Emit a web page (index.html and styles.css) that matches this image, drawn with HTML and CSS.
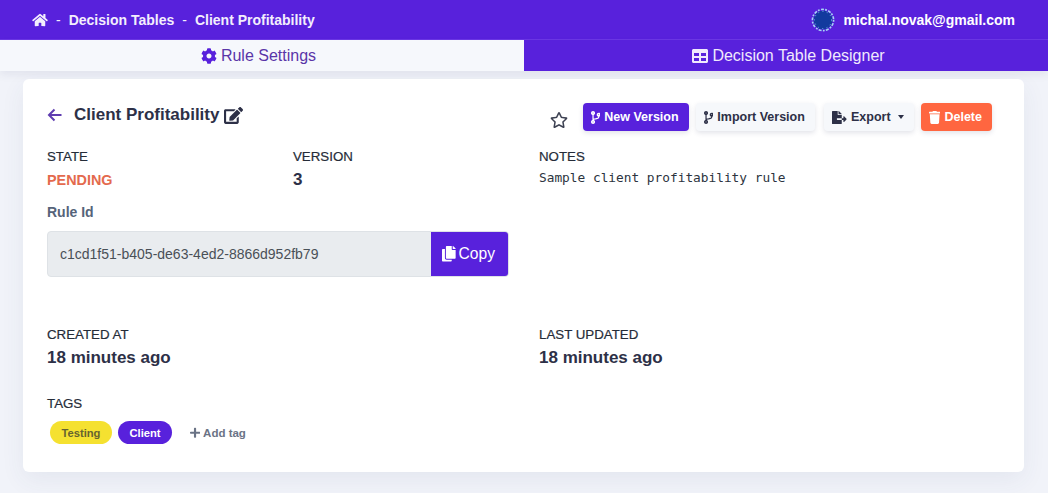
FILE: index.html
```html
<!DOCTYPE html>
<html lang="en">
<head>
    <meta charset="UTF-8">
    <title>Client Profitability</title>
    <link rel="stylesheet" href="styles.css">
</head>
<body>
    <header class="topbar">
        <nav class="crumbs">
            <svg class="icon home" viewBox="0 0 576 512"><path d="M280.37 148.26L96 300.11V464a16 16 0 0 0 16 16l112.06-.29a16 16 0 0 0 15.92-16V368a16 16 0 0 1 16-16h64a16 16 0 0 1 16 16v95.64a16 16 0 0 0 16 16.05L464 480a16 16 0 0 0 16-16V300L295.67 148.26a12.19 12.19 0 0 0-15.3 0zM571.6 251.47L488 182.56V44.05a12 12 0 0 0-12-12h-56a12 12 0 0 0-12 12v72.61L318.47 43a48 48 0 0 0-61 0L4.34 251.47a12 12 0 0 0-1.6 16.9l25.5 31A12 12 0 0 0 45.15 301l235.22-193.74a12.19 12.19 0 0 1 15.3 0L530.9 301a12 12 0 0 0 16.9-1.6l25.5-31a12 12 0 0 0-1.7-16.93z"/></svg>
            <span class="sep">-</span>
            <span>Decision Tables</span>
            <span class="sep">-</span>
            <span>Client Profitability</span>
        </nav>
        <div class="user">
            <svg class="avatar" viewBox="0 0 24 24">
                <circle cx="12" cy="12" r="9.5" fill="#123a9e"/>
                <circle cx="12" cy="12" r="10.6" fill="none" stroke="#a5d4f4" stroke-width="1.6" stroke-dasharray="1.8 1.4 3 1.2"/>
                <circle cx="12" cy="12" r="8.6" fill="none" stroke="#6fa6e6" stroke-width="1" stroke-dasharray="1.2 3.2"/>
            </svg>
            <span>michal.novak@gmail.com</span>
        </div>
    </header>

    <div class="tabs">
        <div class="tab active">
            <svg class="icon" viewBox="0 0 512 512"><path d="M487.4 315.7l-42.6-24.6c4.3-23.2 4.3-47 0-70.2l42.6-24.6c4.9-2.8 7.1-8.6 5.5-14-11.1-35.6-30-67.8-54.7-94.6-3.8-4.1-10-5.1-14.8-2.3L380.8 110c-17.9-15.4-38.5-27.3-60.8-35.1V25.8c0-5.6-3.9-10.5-9.4-11.7-36.7-8.2-74.3-7.8-109.2 0-5.5 1.2-9.4 6.1-9.4 11.7V75c-22.2 7.9-42.8 19.8-60.8 35.1L88.7 85.5c-4.9-2.8-11-1.9-14.8 2.3-24.7 26.7-43.6 58.9-54.7 94.6-1.7 5.4.6 11.2 5.5 14L67.3 221c-4.3 23.2-4.3 47 0 70.2l-42.6 24.6c-4.9 2.8-7.1 8.6-5.5 14 11.1 35.6 30 67.8 54.7 94.6 3.8 4.1 10 5.1 14.8 2.3l42.6-24.6c17.9 15.4 38.5 27.3 60.8 35.1v49.2c0 5.6 3.9 10.5 9.4 11.7 36.7 8.2 74.3 7.8 109.2 0 5.5-1.2 9.4-6.1 9.4-11.7v-49.2c22.2-7.9 42.8-19.8 60.8-35.1l42.6 24.6c4.9 2.8 11 1.9 14.8-2.3 24.7-26.7 43.6-58.9 54.7-94.6 1.5-5.5-.7-11.3-5.6-14.1zM256 336c-44.1 0-80-35.9-80-80s35.9-80 80-80 80 35.9 80 80-35.9 80-80 80z"/></svg>
            Rule Settings
        </div>
        <div class="tab">
            <svg class="icon" viewBox="0 0 512 512"><path d="M464 32H48C21.49 32 0 53.49 0 80v352c0 26.51 21.49 48 48 48h416c26.51 0 48-21.49 48-48V80c0-26.51-21.49-48-48-48zM224 416H64v-96h160v96zm0-160H64v-96h160v96zm224 160H288v-96h160v96zm0-160H288v-96h160v96z"/></svg>
            Decision Table Designer
        </div>
    </div>

    <main class="card">
        <div class="card-head">
            <div class="title">
                <svg class="back" viewBox="0 0 16 16"><path d="M14.5 8H2M7.5 2.5L2 8l5.5 5.5"/></svg>
                <h1>Client Profitability</h1>
                <svg class="icon edit" viewBox="0 0 576 512"><path d="M402.6 83.2l90.2 90.2c3.8 3.8 3.8 10 0 13.8L274.4 405.6l-92.8 10.3c-12.4 1.4-22.9-9.1-21.5-21.5l10.3-92.8L388.8 83.2c3.8-3.8 10-3.8 13.8 0zm162-22.9l-48.8-48.8c-15.2-15.2-39.9-15.2-55.2 0l-35.4 35.4c-3.8 3.8-3.8 10 0 13.8l90.2 90.2c3.8 3.8 10 3.8 13.8 0l35.4-35.4c15.2-15.3 15.2-40 0-55.2zM384 346.2V448H64V128h229.8c3.2 0 6.2-1.3 8.5-3.5l40-40c7.6-7.6 2.2-20.5-8.5-20.5H48C21.5 64 0 85.5 0 112v352c0 26.5 21.5 48 48 48h352c26.5 0 48-21.5 48-48V306.2c0-10.7-12.9-16-20.5-8.5l-40 40c-2.2 2.3-3.5 5.3-3.5 8.5z"/></svg>
            </div>
            <div class="actions">
                <svg class="icon star" viewBox="0 0 576 512"><path d="M528.1 171.5L382 150.2 316.7 17.8c-11.7-23.6-45.6-23.9-57.4 0L194 150.2 47.9 171.5c-26.2 3.8-36.7 36.1-17.7 54.6l105.7 103-25 145.5c-4.5 26.3 23.2 46 46.4 33.7L288 439.6l130.7 68.7c23.2 12.2 50.9-7.4 46.4-33.7l-25-145.5 105.7-103c19-18.5 8.5-50.8-17.7-54.6zM388.6 312.3l23.7 138.4L288 385.4l-124.3 65.3 23.7-138.4-100.6-98 139-20.2 62.2-126 62.2 126 139 20.2-100.6 98z"/></svg>
                <button class="btn btn-primary">
                    <svg class="icon" viewBox="0 0 384 512"><path d="M384 144c0-44.2-35.8-80-80-80s-80 35.8-80 80c0 36.4 24.3 67.1 57.5 76.8-.6 16.1-4.2 28.5-11 36.9-15.4 19.2-49.3 22.4-85.2 25.7-28.2 2.6-57.4 5.4-81.3 16.9v-144c32.5-10.2 56-40.5 56-76.3 0-44.2-35.8-80-80-80S0 35.8 0 80c0 35.8 23.5 66.1 56 76.3v199.3C23.5 365.9 0 396.2 0 432c0 44.2 35.8 80 80 80s80-35.8 80-80c0-34-21.2-63.1-51.2-74.6 3.1-5.2 7.8-9.8 14.9-13.4 16.2-8.2 40.4-10.4 66.1-12.8 42.2-3.9 90-8.4 118.2-43.4 14-17.4 21.1-39.8 21.6-67.9 31.6-10.8 54.4-40.7 54.4-75.9zM80 64c8.8 0 16 7.2 16 16s-7.2 16-16 16-16-7.2-16-16 7.2-16 16-16zm0 384c-8.8 0-16-7.2-16-16s7.2-16 16-16 16 7.2 16 16-7.2 16-16 16zm224-320c8.8 0 16 7.2 16 16s-7.2 16-16 16-16-7.2-16-16 7.2-16 16-16z"/></svg>
                    New Version
                </button>
                <button class="btn btn-light">
                    <svg class="icon" viewBox="0 0 384 512"><path d="M384 144c0-44.2-35.8-80-80-80s-80 35.8-80 80c0 36.4 24.3 67.1 57.5 76.8-.6 16.1-4.2 28.5-11 36.9-15.4 19.2-49.3 22.4-85.2 25.7-28.2 2.6-57.4 5.4-81.3 16.9v-144c32.5-10.2 56-40.5 56-76.3 0-44.2-35.8-80-80-80S0 35.8 0 80c0 35.8 23.5 66.1 56 76.3v199.3C23.5 365.9 0 396.2 0 432c0 44.2 35.8 80 80 80s80-35.8 80-80c0-34-21.2-63.1-51.2-74.6 3.1-5.2 7.8-9.8 14.9-13.4 16.2-8.2 40.4-10.4 66.1-12.8 42.2-3.9 90-8.4 118.2-43.4 14-17.4 21.1-39.8 21.6-67.9 31.6-10.8 54.4-40.7 54.4-75.9zM80 64c8.8 0 16 7.2 16 16s-7.2 16-16 16-16-7.2-16-16 7.2-16 16-16zm0 384c-8.8 0-16-7.2-16-16s7.2-16 16-16 16 7.2 16 16-7.2 16-16 16zm224-320c8.8 0 16 7.2 16 16s-7.2 16-16 16-16-7.2-16-16 7.2-16 16-16z"/></svg>
                    Import Version
                </button>
                <button class="btn btn-light btn-export">
                    <svg class="icon" viewBox="0 0 576 512"><path d="M384 121.9c0-6.3-2.5-12.4-7-16.9L279.1 7c-4.5-4.5-10.6-7-17-7H256v128h128zM571 308l-95.7-96.4c-10.1-10.1-27.4-3-27.4 11.3V288h-64v64h64v65.2c0 14.3 17.3 21.4 27.4 11.3L571 332c6.6-6.6 6.6-17.4 0-24zm-379 28v-32c0-8.8 7.2-16 16-16h176V160H248c-13.2 0-24-10.8-24-24V0H24C10.7 0 0 10.7 0 24v464c0 13.3 10.7 24 24 24h336c13.3 0 24-10.7 24-24V352H208c-8.8 0-16-7.2-16-16z"/></svg>
                    Export
                    <span class="caret"></span>
                </button>
                <button class="btn btn-danger">
                    <svg class="icon" viewBox="0 0 448 512"><path d="M432 32H312l-9.4-18.7A24 24 0 0 0 281.1 0H166.8a23.72 23.72 0 0 0-21.4 13.3L136 32H16A16 16 0 0 0 0 48v32a16 16 0 0 0 16 16h416a16 16 0 0 0 16-16V48a16 16 0 0 0-16-16zM53.2 467a48 48 0 0 0 47.9 45h245.8a48 48 0 0 0 47.9-45L416 128H32z"/></svg>
                    Delete
                </button>
            </div>
        </div>

        <div class="info">
            <div class="left-col">
                <div class="pair">
                    <div>
                        <div class="label">STATE</div>
                        <div class="state">PENDING</div>
                    </div>
                    <div>
                        <div class="label">VERSION</div>
                        <div class="value version">3</div>
                    </div>
                </div>
                <label class="field-label">Rule Id</label>
                <div class="copy-group">
                    <div class="copy-input">c1cd1f51-b405-de63-4ed2-8866d952fb79</div>
                    <button class="copy-btn">
                        <svg class="icon" viewBox="0 0 448 512"><path d="M320 448v40c0 13.255-10.745 24-24 24H24c-13.255 0-24-10.745-24-24V120c0-13.255 10.745-24 24-24h72v296c0 30.879 25.121 56 56 56h168zm0-344V0H152c-13.255 0-24 10.745-24 24v368c0 13.255 10.745 24 24 24h272c13.255 0 24-10.745 24-24V128H344c-13.2 0-24-10.8-24-24zm120.971-31.029L375.029 7.029A24 24 0 0 0 358.059 0H352v96h96v-6.059a24 24 0 0 0-7.029-16.97z"/></svg>
                        Copy
                    </button>
                </div>
            </div>
            <div class="notes">
                <div class="label">NOTES</div>
                <pre>Sample client profitability rule</pre>
            </div>
        </div>

        <div class="dates">
            <div>
                <div class="label">CREATED AT</div>
                <div class="value">18 minutes ago</div>
            </div>
            <div>
                <div class="label">LAST UPDATED</div>
                <div class="value">18 minutes ago</div>
            </div>
        </div>

        <div class="label">TAGS</div>
        <div class="tags">
            <span class="tag tag-yellow">Testing</span>
            <span class="tag tag-purple">Client</span>
            <span class="add-tag">
                <svg class="icon" viewBox="0 0 448 512"><path d="M416 208H272V64c0-17.67-14.33-32-32-32h-32c-17.67 0-32 14.33-32 32v144H32c-17.67 0-32 14.33-32 32v32c0 17.67 14.33 32 32 32h144v144c0 17.67 14.33 32 32 32h32c17.67 0 32-14.33 32-32V304h144c17.67 0 32-14.33 32-32v-32c0-17.67-14.33-32-32-32z"/></svg>
                Add tag
            </span>
        </div>
    </main>
</body>
</html>
```

FILE: styles.css
```css
* {
    box-sizing: border-box;
}

html, body {
    height: 100%;
}

body {
    margin: 0;
    overflow: hidden;
    background-color: #f1f3f9;
    font-family: "Liberation Sans", Arial, sans-serif;
    color: #2d3047;
}

.icon {
    display: inline-block;
    height: 1em;
    fill: currentColor;
    flex: none;
}

.topbar {
    height: 40px;
    padding: 0 33px 0 32px;
    display: flex;
    align-items: center;
    justify-content: space-between;
    background-color: #5821dc;
    border-bottom: 1px solid #6b37e4;
    color: #fff;
    font-size: 14px;
    font-weight: 700;
}

.crumbs {
    display: flex;
    align-items: center;
    gap: 7px;
    color: #f3eefd;
}

.crumbs .sep {
    font-weight: 400;
    margin: 0 1px;
}

.home {
    font-size: 14px;
    width: 16px;
}

.user {
    display: flex;
    align-items: center;
    gap: 8px;
}

.avatar {
    width: 24px;
    height: 24px;
}

.tabs {
    height: 31px;
    display: flex;
    box-shadow: 0 4px 8px rgba(60, 70, 110, 0.08);
}

.tab {
    flex: 0 0 524px;
    display: flex;
    align-items: center;
    justify-content: center;
    gap: 4px;
    padding-left: 5px;
    background-color: #5821dc;
    color: #f0e9fd;
    font-size: 16px;
}

.tab.active {
    padding: 0 7px 0 0;
    background-color: #f6f8fc;
    color: #5a35a8;
}

.tab.active .icon {
    color: #5821dc;
}

.card {
    margin: 8px 24px 0 23px;
    height: 393px;
    padding: 24px;
    background-color: #fff;
    border-radius: 6px;
    box-shadow: 0 8px 24px rgba(60, 70, 110, 0.07);
}

.card-head {
    display: flex;
    justify-content: space-between;
    height: 45px;
}

.title {
    display: flex;
    align-items: center;
    height: 24px;
}

.title h1 {
    margin: 0 5px 0 0;
    font-size: 17px;
    line-height: 24px;
    font-weight: 700;
}

.back {
    width: 16px;
    height: 16px;
    margin-right: 11px;
    fill: none;
    stroke: #5f3db0;
    stroke-width: 2;
}

.edit {
    font-size: 17px;
    width: 19px;
}

.actions {
    display: flex;
    align-items: flex-start;
    gap: 7px;
    padding-right: 8px;
}

.star {
    font-size: 16px;
    width: 18px;
    margin: 9px 8px 0 0;
    color: #3d4152;
}

.btn {
    height: 28px;
    padding: 0 10px 0 8px;
    display: flex;
    align-items: center;
    gap: 4px;
    border: 0;
    border-radius: 4px;
    font-family: inherit;
    font-size: 12.5px;
    font-weight: 700;
    box-shadow: 0 2px 5px rgba(60, 70, 110, 0.15);
}

.btn .icon {
    font-size: 13px;
}

.btn-primary {
    background-color: #5821dc;
    color: #fff;
}

.btn-light {
    background-color: #f6f8fb;
    color: #2d3047;
}

.btn-export {
    margin-left: 2.5px;
}

.btn-danger {
    background-color: #ff6640;
    color: #fff;
}

.caret {
    margin-left: 3.5px;
    border-top: 4px solid currentColor;
    border-left: 3.5px solid transparent;
    border-right: 3.5px solid transparent;
}

.info {
    display: grid;
    grid-template-columns: 492px 1fr;
}

.left-col {
    width: 461px;
}

.pair {
    display: grid;
    grid-template-columns: 246px 1fr;
}

.label {
    font-size: 13.3px;
    line-height: 18px;
    color: #252c38;
    -webkit-text-stroke: 0.2px #252c38;
}

.state {
    margin-top: 5px;
    font-size: 14.4px;
    line-height: 18px;
    font-weight: 700;
    color: #e46a4d;
}

.value {
    margin-top: 4px;
    font-size: 17px;
    line-height: 20px;
    font-weight: 700;
}

.field-label {
    display: block;
    margin-top: 14px;
    font-size: 14px;
    line-height: 16px;
    font-weight: 700;
    color: #56637a;
}

.copy-group {
    display: flex;
    height: 46px;
    margin-top: 11px;
    width: 462px;
    border: 1px solid #dee2e6;
    border-radius: 4px;
    overflow: hidden;
    background-color: #e9ecef;
}

.copy-input {
    flex: 1;
    padding-left: 12px;
    display: flex;
    align-items: center;
    font-size: 14px;
    color: #495057;
}

.copy-btn {
    width: 77px;
    padding: 0 2px 0 0;
    display: flex;
    align-items: center;
    justify-content: center;
    gap: 3px;
    border: 0;
    background-color: #5821dc;
    color: #fff;
    font-family: inherit;
    font-size: 15.6px;
}

.notes pre {
    margin: 3px 0 0;
    font-family: "DejaVu Sans Mono", monospace;
    font-size: 12.8px;
    line-height: 18px;
    color: #2c3440;
}

.dates {
    display: grid;
    grid-template-columns: 492px 1fr;
    margin-top: 49px;
    margin-bottom: 27px;
}

.tags {
    display: flex;
    align-items: center;
    gap: 6px;
    margin: 8px 0 0 3px;
}

.tag {
    height: 23px;
    padding: 0 11.5px;
    display: flex;
    align-items: center;
    border-radius: 12px;
    font-size: 11.2px;
    font-weight: 700;
}

.tag-yellow {
    background-color: #f5e130;
    color: #66632f;
}

.tag-purple {
    background-color: #5821dc;
    color: #fff;
}

.add-tag {
    margin-left: 12px;
    display: flex;
    align-items: center;
    gap: 3px;
    font-size: 11.5px;
    font-weight: 700;
    color: #6a7385;
}
```
